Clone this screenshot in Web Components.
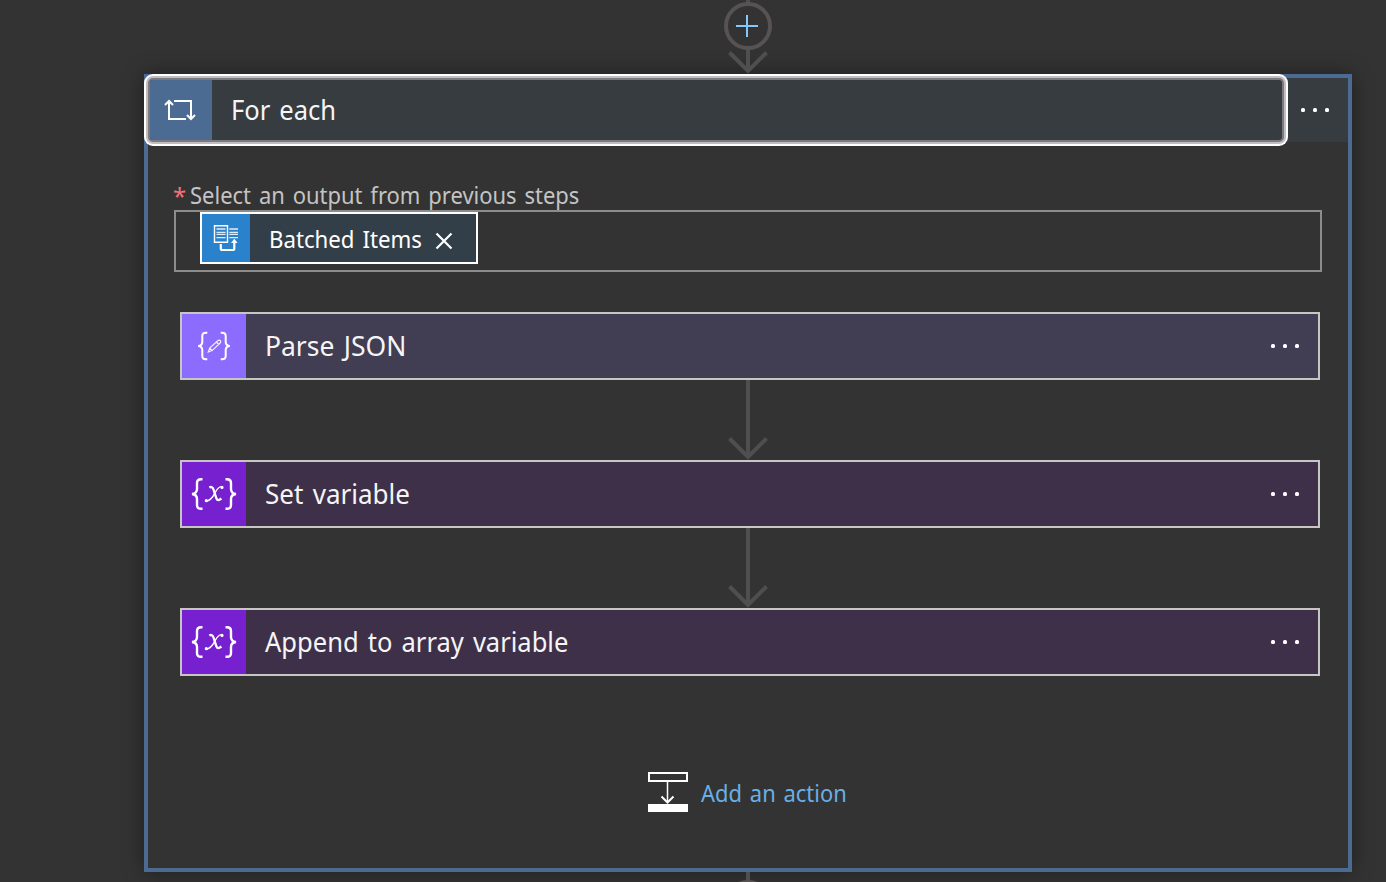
<!DOCTYPE html>
<html lang="en"><head><meta charset="utf-8"><title>Logic app designer</title>
<style>html,body{margin:0;height:100%;overflow:hidden;background:#333}</style></head>
<body><flow-canvas></flow-canvas>
<script>
const FONT = 'font-family:Tahoma,"Noto Sans",sans-serif;';
const NARROW = 'display:block;white-space:nowrap;transform-origin:0 50%;transform:translateY(-1px) scaleX(var(--sx,.912));word-spacing:.097em;';
function define(name, html) {
  const t = document.createElement('template');
  t.innerHTML = html;
  customElements.define(name, class extends HTMLElement {
    constructor() { super(); this.attachShadow({mode:'open'}).appendChild(t.content.cloneNode(true)); }
  });
}
const icons = {
  loop:'<svg width="34" height="32" viewBox="0 0 34 32" fill="none" stroke="#fff" stroke-width="2"><path d="M5 8v17h17M1 11l4-4 4 4M10 7h17v18M23 21l4 4 4-4"/></svg>',
  json:'<svg width="34" height="32" viewBox="0 0 34 32" fill="none" stroke="#fff" stroke-width="2"><path d="M10.300 2.800H9Q5.300 2.800 5.300 6v6q0 3.600-4.100 4 4.100.4 4.100 4v6q0 3.200 3.700 3.200h1.300M23.700 2.800H25q3.700 0 3.700 3.200v6q0 3.600 4.100 4-4.100.4-4.100 4v6q0 3.200-3.700 3.200h-1.300"/><path stroke-width="1.200" opacity=".9" d="M11.300 22l1.400-4 8-7.200q1.700-1.200 2.700-.1.900 1.200-.5 2.500l-7.800 7.400zM12.700 18l2.400 2.600M19.400 12l2.300 2.500"/></svg>',
  variable:'<svg width="46" height="34" viewBox="0 0 46 34" fill="none" stroke="#fff" stroke-width="2.400"><path d="M11.500 2.200H10Q6 2.200 6 6v6q0 4.500-5 5 5 .5 5 5v6q0 3.800 4 3.800h1.500M34.500 2.200H36q4 0 4 3.800v6q0 4.500 5 5-5 .5-5 5v6q0 3.800-4 3.800h-1.500"/><path stroke-width="2.300" d="M18.300 10.600q3-1.800 4.200 1.900l2.800 8.600q1.100 3.700 5.100.4"/><path stroke-width="1.400" d="M31.500 9.900q-3.500-1.600-7.500 6-4 8-9 8.100"/><circle cx="31" cy="10.400" r="1" fill="#fff" stroke-width="1.200"/><circle cx="15.300" cy="23.700" r="1" fill="#fff" stroke-width="1.200"/></svg>'
};
customElements.define('flow-icon', class extends HTMLElement {
  constructor(){ super(); this.attachShadow({mode:'open'}); }
  connectedCallback(){ this.shadowRoot.innerHTML = '<style>:host{display:flex;align-items:center;justify-content:center}svg{display:block}</style>' + icons[this.getAttribute('name')]; }
});
define('more-dots', `<style>:host{display:flex;gap:8px}i{width:4px;height:4px;border-radius:1.500px;background:#fff}</style><i></i><i></i><i></i>`);
define('flow-arrow', `<style>:host{display:block;height:80px;padding-right:4px}svg{display:block;margin:0 auto}</style>
<svg width="44" height="80" fill="none" stroke="#4f4f4f" stroke-width="4"><path d="M22 0v77M3.500 58.500L22 77l18.500-18.500"/></svg>`);
define('action-card', `<style>
:host{display:flex;box-sizing:border-box;height:68px;border:2px solid #c8c6c4;background:var(--bg);align-items:stretch;color:#f5f5f5;${FONT}font-size:28px}
.icon{width:64px;background:var(--accent);display:flex;align-items:center;justify-content:center}
.title{flex:1;padding-left:19px;line-height:64px}.title span{${NARROW}}more-dots{align-self:center;margin-right:19px}
</style><div class="icon"><slot name="icon"></slot></div><div class="title"><span><slot></slot></span></div><more-dots></more-dots>`);
define('value-token', `<style>
:host{display:flex;box-sizing:border-box;width:278px;height:52px;border:2px solid #fff;background:#333f48;color:#fff;${FONT}font-size:24px;line-height:51px}
.icon{width:48px;background:#2a82cc;display:flex;align-items:center;justify-content:center}
.label{padding-left:19px;width:166px}.label span{--sx:.926;${NARROW}}.x{align-self:center;margin-top:6px}
</style><div class="icon"><svg width="28" height="30" viewBox="0 0 28 30" fill="none" stroke="#fff"><path stroke-width="1.400" d="M2.500 2.700h13v16.600h-13z"/><path stroke-width="1.300" d="M4.500 6h9M4.500 9.300h9M4.500 11.400h9M4.500 14.700h9M17.300 6H26M17.300 9.300H26M17.300 11.400H26M17.300 14.700H26" opacity=".85"/><path stroke-width="2.200" d="M8.800 21v4.500q0 1.500 1.500 1.500h10.500q1.500 0 1.500-1.500V18"/><path fill="#fff" stroke="none" d="M19 20l3.300-4.300 3.300 4.300z"/></svg></div>
<div class="label"><span><slot></slot></span></div><svg class="x" width="18" height="18" fill="none" stroke="#fff" stroke-width="2.200"><path d="M1.500 1.500l15 15M16.500 1.500l-15 15"/></svg>`);
define('scope-header', `<style>
:host{display:flex;height:64px;background:#363c40;${FONT}font-size:28px;color:#f5f5f5}
.main{box-sizing:border-box;width:1136px;height:64px;border:2px solid #7c797f;border-radius:5px;box-shadow:0 0 0 2px #c1bec1,0 0 0 4px #fff;display:flex;background:#363c40}
.icon{box-sizing:border-box;width:62px;background:#4b6b93;display:flex;justify-content:center;align-items:center;border-radius:3px 0 0 3px}
.title{padding-left:19px;line-height:60px}.title span{${NARROW}}more-dots{align-self:center;margin-left:17px}
</style><div class="main"><div class="icon"><flow-icon name="loop"></flow-icon></div><div class="title"><span><slot></slot></span></div></div><more-dots></more-dots>`);
define('output-field', `<style>
:host{display:block;margin:40px 26px 0;${FONT}}
.label{height:28px;line-height:28px;font-size:24px;color:#c4c4c4;display:flex;gap:4px}.req{color:#f1707b;width:12px;transform:translateX(-1px)}.txt{--sx:.916;${NARROW}}
.box{box-sizing:border-box;height:62px;border:2px solid #8c8c8c;padding-left:24px}
</style><div class="label"><span class="req">*</span><span class="txt">Select an output from previous steps</span></div><div class="box"><slot></slot></div>`);
define('add-action', `<style>
:host{display:flex;align-items:center;gap:13px;height:40px;margin-top:96px;padding-left:500px;color:#69afe5;${FONT}font-size:24px}
svg{display:block}.t{--sx:.914;${NARROW}padding-top:2px}
</style><svg width="40" height="40" fill="none" stroke="#fff" stroke-width="2"><path d="M1 1h38v8H1zM13.500 24.500l6 6 6-6"/><path stroke-width="1.500" d="M19.500 10v20"/><path fill="#fff" stroke="none" d="M0 32h40v8H0z"/></svg><span class="t">Add an action</span>`);
define('insert-step', `<style>:host{display:block;height:74px}svg{display:block;margin:0 auto}</style>
<svg width="50" height="74" fill="none" stroke-width="4"><path stroke="#4f4f4f" d="M25 0v4M25 48v23M6.500 52.500L25 71l18.500-18.500"/><circle cx="25" cy="26" r="22" stroke="#575352"/><path stroke="#83c7fb" stroke-width="2" d="M13 26h22M24 15v22"/></svg>`);
define('scope-box', `<style>
:host{display:block;box-sizing:border-box;height:798px;border:4px solid #4b6b93;background:#333;box-shadow:0 0 20px rgba(0,0,0,.4)}
.steps{margin:40px 28px 0 32px}
.p{--accent:#8c6cff;--bg:#413d52;--sx:.945}.v{--accent:#7720cf;--bg:#3e3049}.s{--sx:.93}
</style><scope-header>For each</scope-header><output-field><value-token>Batched Items</value-token></output-field>
<div class="steps"><action-card class="p"><flow-icon slot="icon" name="json"></flow-icon>Parse JSON</action-card><flow-arrow></flow-arrow>
<action-card class="v s"><flow-icon slot="icon" name="variable"></flow-icon>Set variable</action-card><flow-arrow></flow-arrow>
<action-card class="v"><flow-icon slot="icon" name="variable"></flow-icon>Append to array variable</action-card></div><add-action></add-action>`);
define('flow-canvas', `<style>:host{display:block;width:1208px;height:882px;margin-left:144px}svg{display:block;margin:0 auto}.end{overflow:hidden;height:10px}</style>
<insert-step></insert-step><scope-box></scope-box><div class="end"><svg width="50" height="60" fill="none" stroke-width="4"><path d="M25 0v10" stroke="#4f4f4f"/><circle cx="25" cy="32" r="22" stroke="#575352"/></svg></div>`);
</script></body></html>
